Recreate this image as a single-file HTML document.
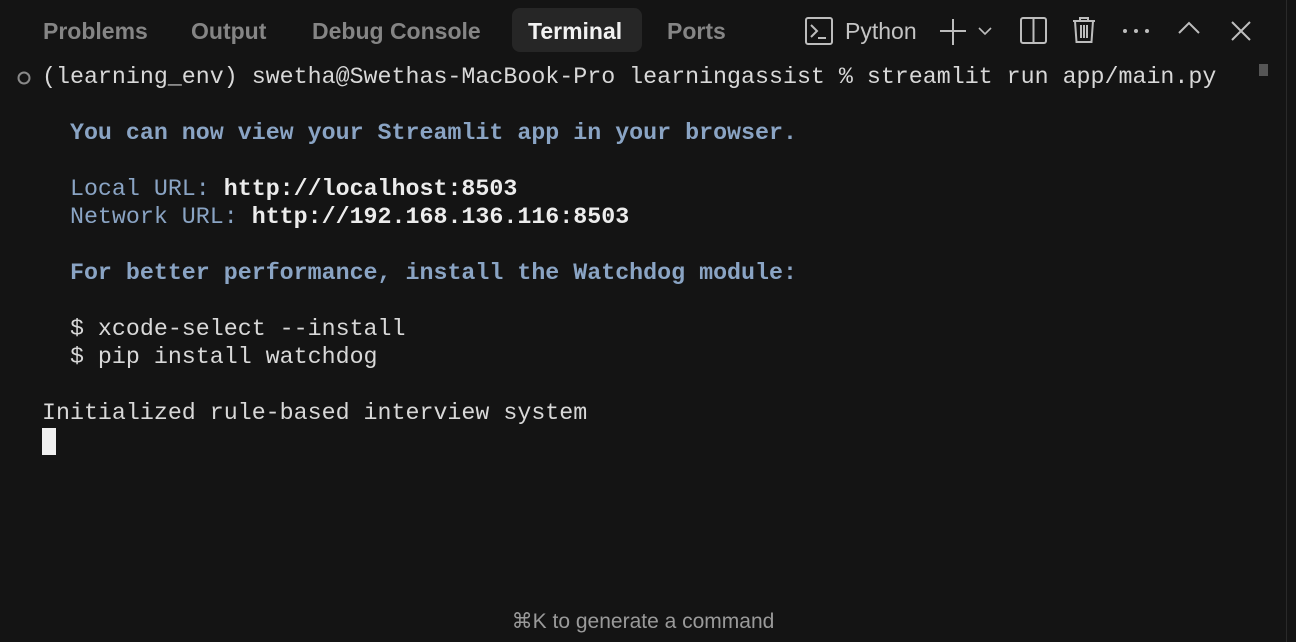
<!DOCTYPE html>
<html><head><style>
body{margin:0;width:1296px;height:642px;background:#141414;overflow:hidden;position:relative;font-family:"Liberation Sans",sans-serif}
.tab{position:absolute;top:16px;font-size:23px;font-weight:bold;color:#858585;line-height:30px}
.term{position:absolute;left:42px;top:63px;font-family:"Liberation Mono",monospace;font-size:23.3px;line-height:28px;color:#d8d8d8;white-space:pre;letter-spacing:0}
.b{color:#8aa4c4;font-weight:bold}
.bl{color:#8aa4c4}
.w{color:#ececec;font-weight:bold}
svg{position:absolute}
</style></head><body>
<div style="position:absolute;left:1286px;top:0;width:1px;height:642px;background:#2a2a2a"></div>
<div class="tab" style="left:43px">Problems</div>
<div class="tab" style="left:191px">Output</div>
<div class="tab" style="left:312px">Debug Console</div>
<div style="position:absolute;left:512px;top:8px;width:130px;height:44px;background:#262626;border-radius:8px"></div>
<div class="tab" style="left:528px;color:#f2f2f2">Terminal</div>
<div class="tab" style="left:667px">Ports</div>
<svg style="left:805px;top:17px" width="28" height="28" viewBox="0 0 28 28" fill="none" stroke="#bdbdbd" stroke-width="2"><rect x="1" y="1" width="26" height="26" rx="2"/><path d="M6 8l6 6-6 6M13 21h8"/></svg>
<div class="tab" style="left:845px;color:#c4c4c4;font-weight:normal">Python</div>
<svg style="left:940px;top:17px" width="60" height="28" fill="none" stroke="#bdbdbd" stroke-width="2"><path d="M13 2v26M0 14h26"/><path d="M39 11l6 6 6-6" stroke-width="1.6"/></svg>
<svg style="left:1020px;top:17px" width="28" height="28" fill="none" stroke="#bdbdbd" stroke-width="2"><rect x="1" y="1" width="25" height="25" rx="2"/><path d="M13.5 1v25"/></svg>
<svg style="left:1072px;top:16px" width="24" height="28" fill="none" stroke="#bdbdbd" stroke-width="2"><path d="M1 5h22M8 5V2h8v3M3 5l1.5 21h15L21 5M9 9v13M12 9v13M15 9v13"/></svg>
<svg style="left:1122px;top:28px" width="30" height="6" fill="#bdbdbd"><circle cx="3" cy="3" r="2"/><circle cx="14" cy="3" r="2"/><circle cx="25" cy="3" r="2"/></svg>
<svg style="left:1177px;top:20px" width="24" height="16" fill="none" stroke="#bdbdbd" stroke-width="2"><path d="M2 13L12 3l10 10"/></svg>
<svg style="left:1230px;top:20px" width="22" height="22" fill="none" stroke="#bdbdbd" stroke-width="2"><path d="M2 2l18 18M20 2L2 20"/></svg>
<svg style="left:17px;top:71px" width="14" height="14" fill="none" stroke="#8a8a8a" stroke-width="2"><circle cx="7" cy="7" r="5.5"/></svg>
<div style="position:absolute;left:1259px;top:64px;width:9px;height:12px;background:#555"></div>
<div class="term">(learning_env) swetha@Swethas-MacBook-Pro learningassist % streamlit run app/main.py

  <span class="b">You can now view your Streamlit app in your browser.</span>

  <span class="bl">Local URL: </span><span class="w">http://localhost:8503</span>
  <span class="bl">Network URL: </span><span class="w">http://192.168.136.116:8503</span>

  <span class="b">For better performance, install the Watchdog module:</span>

  $ xcode-select --install
  $ pip install watchdog

Initialized rule-based interview system</div>
<div style="position:absolute;left:42px;top:428px;width:14px;height:27px;background:#f0f0f0"></div>
<div style="position:absolute;left:0;width:1286px;top:609px;text-align:center;font-size:21px;color:#9a9a9a;font-family:'Liberation Sans','DejaVu Sans',sans-serif">⌘K to generate a command</div>
</body></html>
